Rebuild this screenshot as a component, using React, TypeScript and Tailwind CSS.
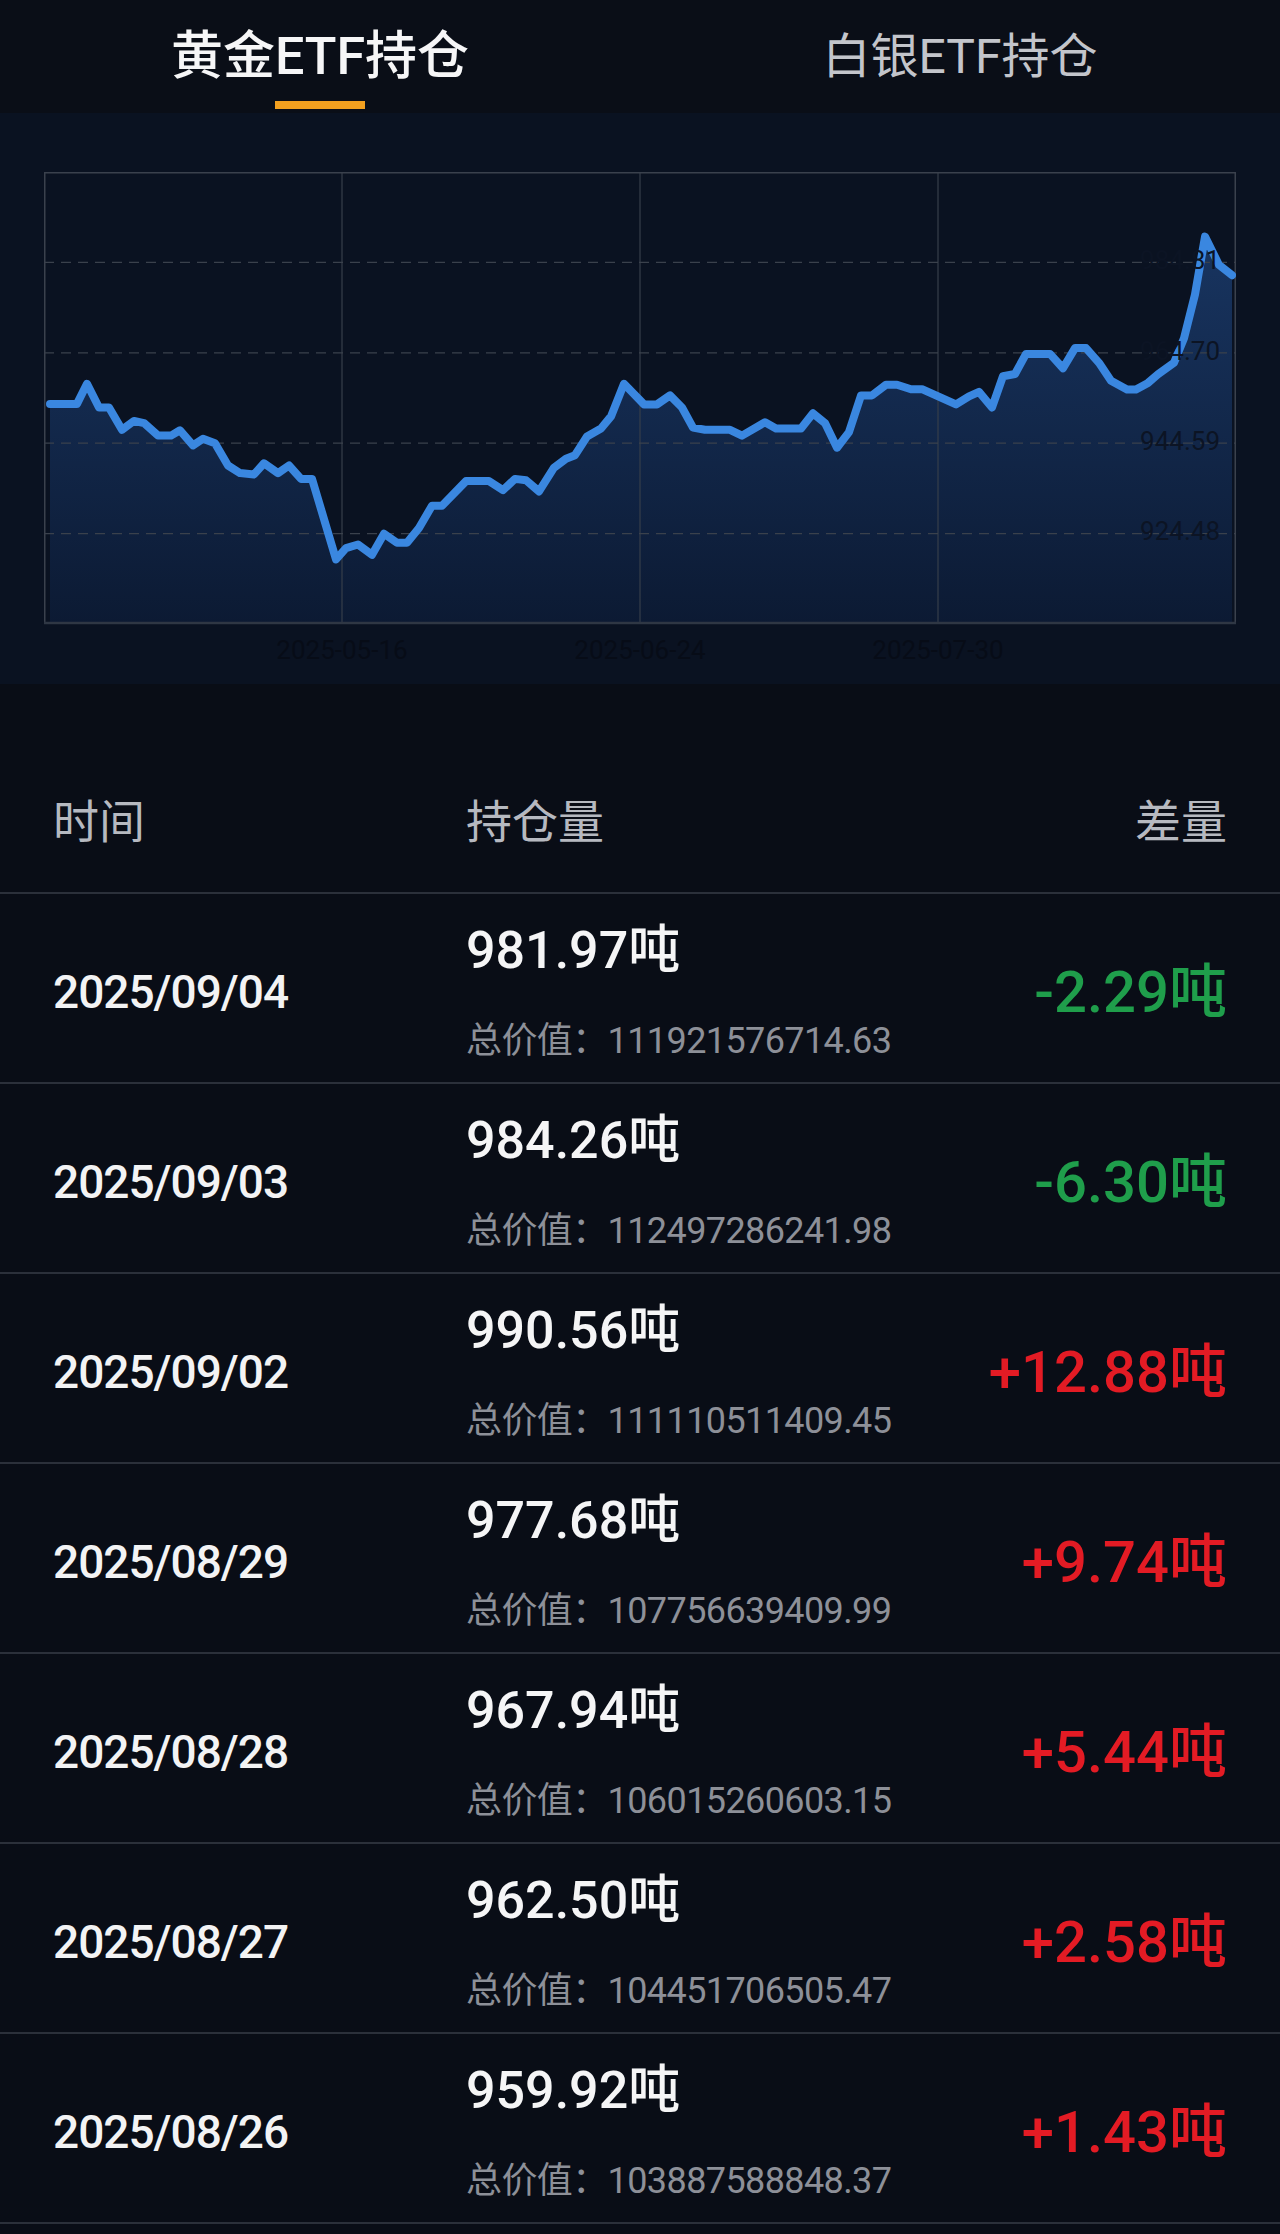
import { useState } from "react";

type Row = {
  date: string;
  hold: string;
  total: string;
  diff: string;
};

const rows: Row[] = [
  { date: "2025/09/04", hold: "981.97", total: "111921576714.63", diff: "-2.29" },
  { date: "2025/09/03", hold: "984.26", total: "112497286241.98", diff: "-6.30" },
  { date: "2025/09/02", hold: "990.56", total: "111110511409.45", diff: "+12.88" },
  { date: "2025/08/29", hold: "977.68", total: "107756639409.99", diff: "+9.74" },
  { date: "2025/08/28", hold: "967.94", total: "106015260603.15", diff: "+5.44" },
  { date: "2025/08/27", hold: "962.50", total: "104451706505.47", diff: "+2.58" },
  { date: "2025/08/26", hold: "959.92", total: "103887588848.37", diff: "+1.43" },
];

// [x position in the plot, holding in tonnes]
const trend: [number, number][] = [
  [6, 953.33], [33, 953.33], [43, 957.8], [55, 952.53], [65, 952.53], [78, 947.57],
  [90, 949.55], [100, 949.06], [114, 946.28], [127, 946.28], [136, 947.47], [149, 944.09],
  [159, 945.58], [171, 944.59], [184, 939.62], [196, 937.94], [210, 937.64], [220, 940.12],
  [234, 937.94], [245, 939.62], [257, 936.64], [268, 936.64], [292, 918.77], [302, 921.25],
  [314, 922.05], [328, 919.76], [340, 924.43], [353, 922.44], [363, 922.44], [375, 925.72],
  [388, 930.69], [398, 930.69], [422, 936.15], [445, 936.15], [459, 934.16], [471, 936.64],
  [482, 936.35], [495, 933.86], [510, 939.13], [522, 941.11], [531, 941.91], [543, 946.08],
  [557, 947.87], [567, 950.55], [580, 957.8], [600, 953.23], [613, 953.23], [626, 955.22],
  [638, 952.53], [649, 948.07], [661, 947.57], [686, 947.57], [698, 946.28], [721, 949.26],
  [732, 947.87], [757, 947.87], [769, 951.24], [781, 949.06], [793, 943.6], [805, 947.07],
  [817, 955.22], [828, 955.22], [842, 957.6], [853, 957.6], [867, 956.61], [878, 956.61],
  [912, 953.23], [925, 955.02], [935, 956.01], [948, 952.53], [959, 959.49], [971, 959.98],
  [982, 964.45], [1006, 964.45], [1019, 961.27], [1031, 965.74], [1042, 965.74], [1055, 962.47],
  [1067, 958.49], [1083, 956.51], [1092, 956.51], [1104, 958.0], [1114, 959.92], [1130, 962.5],
  [1140, 967.94], [1151, 977.68], [1161, 990.56], [1175, 984.26], [1188, 981.97],
];

const W = 1192;
const H = 452;
const Y_MAX = 1004.92;
const Y_MIN = 904.37;
const yTicks = [984.81, 964.7, 944.59, 924.48];
const xTicks = ["2025-05-16", "2025-06-24", "2025-07-30"];

const toY = (v: number) => ((Y_MAX - v) / (Y_MAX - Y_MIN)) * H;

function HoldingChart() {
  const line = trend
    .map(([x, v], i) => `${i === 0 ? "M" : "L"}${x},${toY(v).toFixed(1)}`)
    .join(" ");
  const first = trend[0][0];
  const last = trend[trend.length - 1][0];
  const area = `${line} L${last},${H} L${first},${H} Z`;

  return (
    <svg width={W} height={500} viewBox={`0 0 ${W} 500`} className="block">
      <defs>
        <linearGradient id="fill" x1="0" y1="0" x2="0" y2={H} gradientUnits="userSpaceOnUse">
          <stop offset="0" stopColor="#1a3968" />
          <stop offset="1" stopColor="#0c1a33" />
        </linearGradient>
      </defs>

      <path d={area} fill="url(#fill)" />

      {[1, 2, 3].map((i) => (
        <line key={i} x1={(W / 4) * i} y1={0} x2={(W / 4) * i} y2={H} stroke="#363e4a" strokeWidth={1.2} />
      ))}
      {yTicks.map((_, i) => (
        <line
          key={i}
          x1={0}
          x2={W}
          y1={(H / 5) * (i + 1)}
          y2={(H / 5) * (i + 1)}
          stroke="#3a414c"
          strokeWidth={1.2}
          strokeDasharray="10 7"
        />
      ))}

      <rect x={0.75} y={0.75} width={W - 1.5} height={H - 1.5} fill="none" stroke="#3a414d" strokeWidth={1.5} />
      <line x1={0} x2={W} y1={H - 1} y2={H - 1} stroke="#2f3744" strokeWidth={2.5} />

      <path d={line} fill="none" stroke="#3a87e0" strokeWidth={8} strokeLinejoin="round" strokeLinecap="round" />

      {yTicks.map((t, i) => (
        <text
          key={t}
          x={1176}
          y={(H / 5) * (i + 1)}
          textAnchor="end"
          dominantBaseline="middle"
          fontSize={26}
          fill="#0c1424"
        >
          {t.toFixed(2)}
        </text>
      ))}
      {xTicks.map((t, i) => (
        <text
          key={t}
          x={(W / 4) * (i + 1)}
          y={480}
          textAnchor="middle"
          dominantBaseline="middle"
          fontSize={26}
          fill="#070c17"
        >
          {t}
        </text>
      ))}
    </svg>
  );
}

export default function App() {
  const [tab, setTab] = useState(0);
  const tabs = ["黄金ETF持仓", "白银ETF持仓"];

  return (
    <div className="min-h-screen bg-[#090d16] font-[Roboto,'Noto_Sans_CJK_SC',sans-serif] text-white">
      <div className="flex h-[113px] bg-[#0a0e17]">
        {tabs.map((label, i) => (
          <button
            key={label}
            onClick={() => setTab(i)}
            className="flex flex-1 flex-col items-center pt-[27px]"
          >
            <span
              className={
                i === tab
                  ? "text-[52px] leading-[60px] font-medium text-[#f6f6f7]"
                  : "text-[48px] leading-[60px] text-[#c3c5cb]"
              }
            >
              {label}
            </span>
            {i === tab && <span className="mt-[14px] h-[8px] w-[90px] bg-[#f2a01f]" />}
          </button>
        ))}
      </div>

      <div className="bg-[#0a1221] px-[44px] pt-[59px] pb-[12px]">
        <HoldingChart />
      </div>

      <div className="grid grid-cols-[413px_1fr_auto] border-b-2 border-[#2b303a] px-[53px] pt-[110px] pb-[42px] text-[46px] leading-[56px] text-[#b6b9c0]">
        <span>时间</span>
        <span>持仓量</span>
        <span className="text-right">差量</span>
      </div>

      {rows.map((r) => (
        <div
          key={r.date}
          className="grid h-[190px] grid-cols-[413px_1fr_auto] items-center border-b-2 border-[#2b303a] px-[53px] pt-[8px]"
        >
          <span className="text-[46px] leading-[56px] font-medium tracking-[-1px] text-[#f3f3f4]">{r.date}</span>
          <div className="flex flex-col">
            <span className="text-[52px] leading-[60px] font-medium text-[#f5f5f6]">{r.hold}吨</span>
            <span className="mt-[38px] text-[36px] leading-[44px] tracking-[-0.6px] text-[#8d9098]">
              总价值：{r.total}
            </span>
          </div>
          <span
            className={
              r.diff.startsWith("-")
                ? "text-right text-[58px] leading-[66px] font-medium text-[#1f9e4b]"
                : "text-right text-[58px] leading-[66px] font-medium text-[#e31b24]"
            }
          >
            {r.diff}吨
          </span>
        </div>
      ))}
    </div>
  );
}
